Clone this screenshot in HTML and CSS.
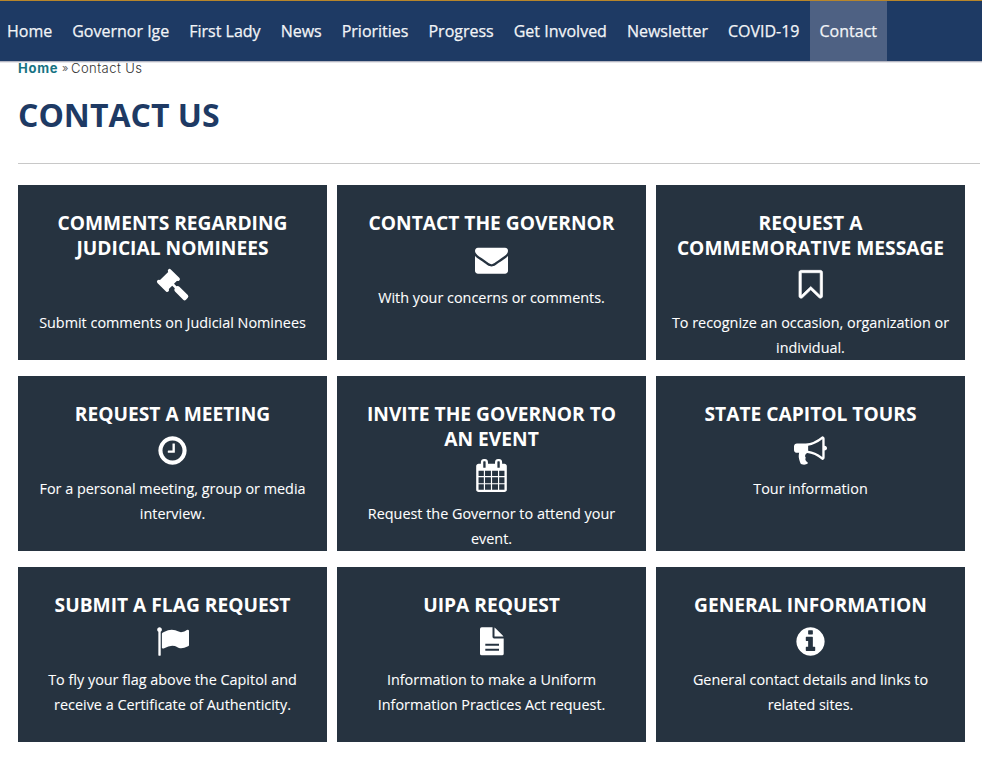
FILE: index.html
```html
<!DOCTYPE html>
<html lang="en">
<head>
<meta charset="utf-8">
<title>Contact Us</title>
<link rel="stylesheet" href="styles.css">
</head>
<body>
<nav class="nav">
  <a>Home</a><a>Governor Ige</a><a>First Lady</a><a>News</a><a>Priorities</a><a>Progress</a><a>Get Involved</a><a>Newsletter</a><a>COVID-19</a><a class="active">Contact</a>
</nav>
<main class="main">
  <div class="crumbs"><b>Home</b><i>»</i><span>Contact Us</span></div>
  <h1><span>CONTACT US</span></h1>
  <hr>
  <section class="grid">
    <article class="card"><h2>COMMENTS REGARDING<br>JUDICIAL NOMINEES</h2>
      <svg class="icon" viewBox="0 0 33 33"><path d="M12.300 1.400Q13.500 .2 14.800 1.400L23.500 10Q24.600 11.400 23.300 12.500Q22.300 13.400 21 12.800L18 15.800 20.500 18.300Q22 17.300 23.400 18.700L31.800 27Q33 28.400 31.800 29.800L30 31.800Q28.600 33 27.200 31.800L19 23.500Q17.600 22 18.800 20.300L16.200 17.700 12.800 21Q13.500 22.300 12.600 23.300Q11.300 24.500 10 23.400L1.400 14.900Q.3 13.500 1.500 12.300Q2.600 11.300 4 12.100L12.200 4Q11.300 2.600 12.300 1.400z"/></svg>
      <p>Submit comments on Judicial Nominees</p></article>
    <article class="card"><h2>CONTACT THE GOVERNOR</h2>
      <svg class="icon" viewBox="0 0 1792 1792"><path d="M1792 710v794q0 66-47 113t-113 47h-1472q-66 0-113-47t-47-113v-794q44 49 101 87 362 246 497 345 57 42 92.5 65.5t94.5 48 110 24.5h2q51 0 110-24.5t94.5-48 92.5-65.5q170-123 498-345 57-39 100-87zm0-294q0 79-49 151t-122 123q-376 261-468 325-10 7-42.5 31t-54 38.8-52 32.5-57.5 27-50 9h-2q-23 0-50-9t-57.5-27-52-32.5-54-38.8-42.5-31q-91-64-262-182.5t-205-142.5q-62-42-117-115.5t-55-136.5q0-78 41.5-130t118.5-52h1472q65 0 112.5 47t47.5 113z"/></svg>
      <p>With your concerns or comments.</p></article>
    <article class="card"><h2>REQUEST A<br>COMMEMORATIVE MESSAGE</h2>
      <svg class="icon bold" viewBox="50 0 1792 1792"><path d="M1472 256h-1024v1242l423-406 89-85 89 85 423 406v-1242zm12-128q23 0 44 9 33 13 52.500 41t19.500 62v1289q0 34-19.500 62t-52.500 41q-19 8-44 8-48 0-83-32l-441-424-441 424q-36 33-83 33-23 0-44-9-33-13-52.500-41t-19.500-62v-1289q0-34 19.500-62t52.500-41q21-9 44-9h1048z"/></svg>
      <p>To recognize an occasion, organization or<br>individual.</p></article>
    <article class="card"><h2>REQUEST A MEETING</h2>
      <svg class="icon" viewBox="0 0 1792 1792"><path d="M1024 544v448q0 14-9 23t-23 9h-320q-14 0-23-9t-9-23v-64q0-14 9-23t23-9h224v-352q0-14 9-23t23-9h64q14 0 23 9t9 23zm416 352q0-148-73-273t-198-198-273-73-273 73-198 198-73 273 73 273 198 198 273 73 273-73 198-198 73-273zm224 0q0 209-103 385.500t-279.500 279.500-385.500 103-385.500-103-279.500-279.500-103-385.500 103-385.500 279.500-279.500 385.500-103 385.500 103 279.500 279.500 103 385.500z"/></svg>
      <p>For a personal meeting, group or media<br>interview.</p></article>
    <article class="card"><h2>INVITE THE GOVERNOR TO<br>AN EVENT</h2>
      <svg class="icon" viewBox="0 0 1792 1792"><path d="M192 1664h288v-288h-288v288zm352 0h320v-288h-320v288zm-352-352h288v-320h-288v320zm352 0h320v-320h-320v320zm-352-384h288v-288h-288v288zm736 736h320v-288h-320v288zm-384-736h320v-288h-320v288zm768 736h288v-288h-288v288zm-384-352h320v-320h-320v320zm-352-864v-288q0-13-9.500-22.500t-22.500-9.500h-64q-13 0-22.500 9.500t-9.500 22.500v288q0 13 9.500 22.500t22.500 9.500h64q13 0 22.500-9.500t9.500-22.500zm736 864h288v-320h-288v320zm-384-384h320v-288h-320v288zm384 0h288v-288h-288v288zm32-480v-288q0-13-9.500-22.500t-22.500-9.500h-64q-13 0-22.500 9.500t-9.500 22.500v288q0 13 9.500 22.500t22.500 9.500h64q13 0 22.500-9.500t9.500-22.500zm384-64v1280q0 52-38 90t-90 38h-1408q-52 0-90-38t-38-90v-1280q0-52 38-90t90-38h128v-96q0-66 47-113t113-47h64q66 0 113 47t47 113v96h384v-96q0-66 47-113t113-47h64q66 0 113 47t47 113v96h128q52 0 90 38t38 90z"/></svg>
      <p>Request the Governor to attend your<br>event.</p></article>
    <article class="card"><h2>STATE CAPITOL TOURS</h2>
      <svg class="icon" viewBox="0 0 1792 1792"><path d="M1664 640q53 0 90.500 37.500t37.500 90.500-37.500 90.500-90.500 37.500v384q0 52-38 90t-90 38q-417-347-812-380-58 19-91 66t-31 100.500 40 92.500q-20 33-23 65.500t6 58 33.500 55 48 50 61.500 50.500q-29 58-111.500 83t-168.500 11.500-132-55.500q-7-23-29.500-87.500t-32-94.500-23-89-15-101 3.500-98.500 22-110.500h-122q-66 0-113-47t-47-113v-192q0-66 47-113t113-47h480q435 0 896-384 52 0 90 38t38 90v384zm-128 604v-954q-394 302-768 343v270q377 42 768 341z"/></svg>
      <p>Tour information</p></article>
    <article class="card"><h2>SUBMIT A FLAG REQUEST</h2>
      <svg class="icon" viewBox="0 0 1792 1792"><path d="M320 256q0 72-64 110v1266q0 13-9.500 22.500t-22.500 9.500h-64q-13 0-22.500-9.500t-9.500-22.500v-1266q-64-38-64-110 0-53 37.500-90.500t90.500-37.500 90.500 37.500 37.500 90.500zm1472 64v763q0 25-12.500 38.500t-39.500 27.500q-215 116-369 116-61 0-123.500-22t-108.500-48-115.500-48-142.500-22q-192 0-464 146-17 9-33 9-26 0-45-19t-19-45v-742q0-32 31-55 21-14 79-43 236-120 421-120 107 0 200 29t219 88q38 19 88 19 54 0 117.500-21t110-47 88-47 54.500-21q26 0 45 19t19 45z"/></svg>
      <p>To fly your flag above the Capitol and<br>receive a Certificate of Authenticity.</p></article>
    <article class="card"><h2>UIPA REQUEST</h2>
      <svg class="icon" viewBox="0 0 33 33"><path fill-rule="evenodd" d="M6.700 2.300H17.500V11.800Q17.500 13.400 19.100 13.400H28.700V28.700Q28.700 30.300 27.100 30.300H6.700Q5 30.300 5 28.700V4Q5 2.300 6.700 2.300zM10.300 18.800V20.800H24V18.800zM10.300 23.800V25.800H24V23.800zM19.500 2.600Q20.200 3 20.700 3.500L27.500 10.300Q28.200 11 28.500 11.600H19.500z"/></svg>
      <p>Information to make a Uniform<br>Information Practices Act request.</p></article>
    <article class="card"><h2>GENERAL INFORMATION</h2>
      <svg class="icon" viewBox="0 0 1792 1792"><path d="M1152 1376v-160q0-14-9-23t-23-9h-96v-512q0-14-9-23t-23-9h-320q-14 0-23 9t-9 23v160q0 14 9 23t23 9h96v320h-96q-14 0-23 9t-9 23v160q0 14 9 23t23 9h448q14 0 23-9t9-23zm-128-896v-160q0-14-9-23t-23-9h-192q-14 0-23 9t-9 23v160q0 14 9 23t23 9h192q14 0 23-9t9-23zm640 416q0 209-103 385.500t-279.500 279.500-385.500 103-385.500-103-279.500-279.500-103-385.500 103-385.500 279.500-279.500 385.500-103 385.500 103 279.500 279.500 103 385.500z"/></svg>
      <p>General contact details and links to<br>related sites.</p></article>
  </section>
</main>
</body>
</html>
```
FILE: styles.css
```css
* { box-sizing: border-box; }
body { margin: 0; background: #fff; font-family: "Open Sans", sans-serif; overflow: hidden; }
.nav { display: flex; height: 62px; padding-right: 10px; background: #1e3a64; border-top: 1px solid #b8862b; border-bottom: 1px solid #b4b6c2; box-shadow: 0 1px 0 #e6e6ea; }
.nav a { flex: none; padding: 0 10px; line-height: 60px; font-size: 16.01px; color: #f2f4f7; white-space: nowrap; -webkit-text-stroke: .25px #f2f4f7; }
.nav a:first-child { padding-left: 7px; }
.nav .active { background: #4e6183; }
.main { padding: 0 2px 0 18px; }
.crumbs { display: flex; height: 18px; line-height: 13px; font-family: Inter, sans-serif; font-size: 13px; color: #333; }
.crumbs b { width: 44px; letter-spacing: .75px; color: #177383; }
.crumbs i { width: 9px; font-style: normal; font-size: 11px; color: #666; }
.crumbs span { font-weight: 300; letter-spacing: .45px; }
h1 { margin: 0; height: 83px; padding-top: 15px; line-height: 40px; font-size: 32px; font-weight: 700; color: #1e3a64; }
hr { margin: 0; height: 1px; border: 0; background: #c8c8c8; }
.grid { display: grid; grid-template-columns: repeat(3, 309px); grid-auto-rows: 175px; gap: 16px 10px; padding-top: 21px; }
.card { padding-top: 25px; background: #263340; color: #fff; text-align: center; overflow: hidden; }
.card h2 { margin: 0; font-size: 19.2px; line-height: 25px; font-weight: 700; }
.card p { margin: 0; font-size: 14.4px; line-height: 25px; white-space: nowrap; -webkit-text-stroke: .08px #fff; }
.icon { display: block; width: 33px; height: 33px; margin: 8px auto 9px; fill: #fff; }
.bold { stroke: #fff; stroke-width: 36; }
```
